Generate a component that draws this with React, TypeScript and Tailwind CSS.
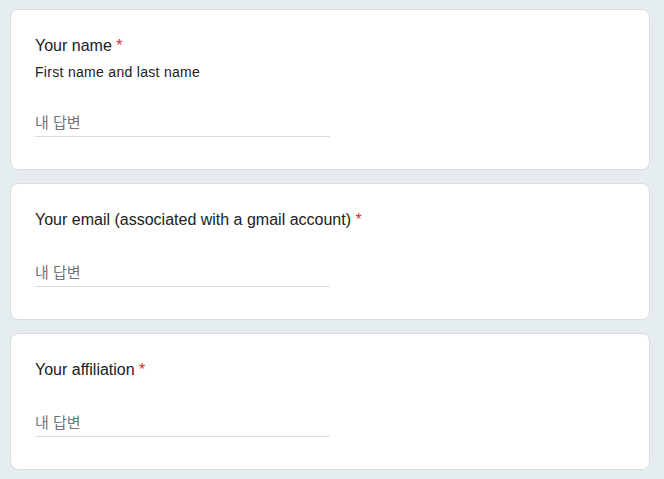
import React from "react";

// Question card for a short-answer field
function QuestionCard({ title, description }: { title: string; description?: string }) {
  return (
    <div className="mb-[13px] rounded-lg border border-[#dadce0] bg-white px-6 pt-6 pb-8">
      <div className="text-[16px] leading-6 text-[#202124]">
        {title}
        <span className="text-[#d93025]"> *</span>
      </div>
      {description && (
        <div className="mt-1 text-[14px] leading-5 tracking-[0.3px] text-[#202124]">{description}</div>
      )}
      <div className="mt-[23px] flex h-8 w-1/2 items-center border-b border-[#dadce0] pt-[5px]">
        <span className="text-[15px] text-[#70757a]">내 답변</span>
      </div>
    </div>
  );
}

export default function App() {
  return (
    <div
      className="min-h-[479px] bg-[#e6edef] pt-[9px] pl-[10px]"
      style={{ fontFamily: "'Liberation Sans', 'Noto Sans CJK KR', sans-serif" }}
    >
      <div className="w-[640px]">
        <QuestionCard title="Your name" description="First name and last name" />
        <QuestionCard title="Your email (associated with a gmail account)" />
        <QuestionCard title="Your affiliation" />
      </div>
    </div>
  );
}
